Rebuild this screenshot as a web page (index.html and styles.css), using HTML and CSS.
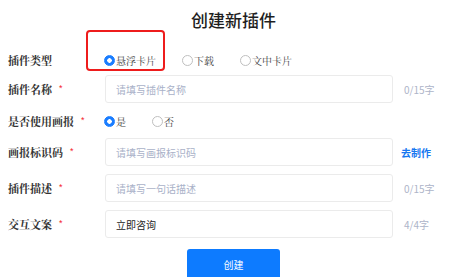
FILE: index.html
```html
<!DOCTYPE html>
<html lang="zh">
<head>
<meta charset="utf-8">
<link rel="stylesheet" href="styles.css">
</head>
<body>
<div class="page">
  <h1 class="title">创建新插件</h1>
  <div class="form">
    <div class="row row-type">
      <div class="label">插件类型</div>
      <div class="radios">
        <span class="radio checked"><span class="dot"></span>悬浮卡片</span>
        <span class="radio"><span class="dot"></span>下载</span>
        <span class="radio"><span class="dot"></span>文中卡片</span>
      </div>
    </div>
    <div class="row">
      <div class="label">插件名称<span class="req">*</span></div>
      <input class="input" type="text" placeholder="请填写插件名称">
      <span class="count">0/15字</span>
    </div>
    <div class="row row-toggle">
      <div class="label">是否使用画报<span class="req">*</span></div>
      <div class="radios">
        <span class="radio checked"><span class="dot"></span>是</span>
        <span class="radio"><span class="dot"></span>否</span>
      </div>
    </div>
    <div class="row">
      <div class="label">画报标识码<span class="req">*</span></div>
      <input class="input" type="text" placeholder="请填写画报标识码">
      <span class="link">去制作</span>
    </div>
    <div class="row">
      <div class="label">插件描述<span class="req">*</span></div>
      <input class="input" type="text" placeholder="请填写一句话描述">
      <span class="count">0/15字</span>
    </div>
    <div class="row">
      <div class="label">交互文案<span class="req">*</span></div>
      <input class="input" type="text" value="立即咨询">
      <span class="count">4/4字</span>
    </div>
    <div class="actions">
      <button class="btn" type="button">创建</button>
    </div>
  </div>
  <div class="highlight"></div>
</div>
</body>
</html>
```

FILE: styles.css
```css
html, body {
  margin: 0;
  padding: 0;
  background: #ffffff;
}
.page {
  position: relative;
  width: 455px;
  height: 277px;
  overflow: hidden;
  font-family: "Noto Sans CJK SC", "Noto Sans", sans-serif;
  color: #333333;
}
.title {
  margin: 0;
  height: 46px;
  box-sizing: border-box;
  padding-top: 10px;
  padding-left: 12px;
  text-align: center;
  font-size: 17px;
  line-height: 20px;
  font-weight: 500;
  color: #1f1f1f;
}
.form {
  display: flex;
  flex-direction: column;
  padding-left: 8px;
}
.row {
  display: flex;
  align-items: center;
  height: 28px;
  margin-bottom: 8px;
}
.row-type {
  margin-bottom: 1px;
}
.row-toggle {
  height: 20px;
  margin-bottom: 7px;
}
.label {
  width: 97px;
  flex: none;
  display: flex;
  align-items: center;
  font-family: "Noto Serif CJK SC", "Liberation Serif", serif;
  font-size: 11px;
  font-weight: 700;
  color: #333333;
}
.req {
  color: #f5222d;
  font-family: "Liberation Sans", sans-serif;
  font-weight: 400;
  font-size: 9px;
  margin-left: 7px;
  position: relative;
  top: -1px;
}
.radios {
  display: flex;
  align-items: center;
  gap: 26px;
  margin-left: -1px;
}
.radio {
  display: flex;
  align-items: center;
  font-family: "Noto Serif CJK SC", "Liberation Serif", serif;
  font-size: 10px;
  color: #444444;
}
.dot {
  width: 9px;
  height: 9px;
  border: 1px solid #bfbfbf;
  border-radius: 50%;
  box-sizing: content-box;
  margin-right: 1px;
  background: #ffffff;
}
.radio.checked .dot {
  border-color: #1a7dff;
  background: radial-gradient(circle, #ffffff 0 2px, #1a7dff 2.5px);
}
.input {
  width: 288px;
  height: 28px;
  box-sizing: border-box;
  border: 1px solid #ebebeb;
  border-radius: 3px;
  padding: 0 10px;
  margin: 0;
  font-family: "Noto Sans CJK SC", "Noto Sans", sans-serif;
  font-size: 10px;
  color: #222222;
  outline: none;
  background: #ffffff;
}
.input::placeholder {
  color: #a9b1c8;
}
.count {
  margin-left: 11px;
  font-size: 10px;
  color: #adb4c8;
}
.link {
  margin-left: 8px;
  font-size: 10px;
  font-weight: 700;
  color: #1677f0;
}
.actions {
  display: flex;
  justify-content: center;
  padding-left: 4px;
  margin-top: 3px;
}
.btn {
  width: 93px;
  height: 30px;
  border: none;
  border-radius: 3px;
  background: #0d7bff;
  color: #ffffff;
  font-family: "Noto Sans CJK SC", "Noto Sans", sans-serif;
  font-size: 10px;
  padding: 0;
}
.highlight {
  position: absolute;
  left: 86px;
  top: 30px;
  width: 79px;
  height: 41px;
  box-sizing: border-box;
  border: 2px solid #ee1c1c;
  border-radius: 4px;
}
```
